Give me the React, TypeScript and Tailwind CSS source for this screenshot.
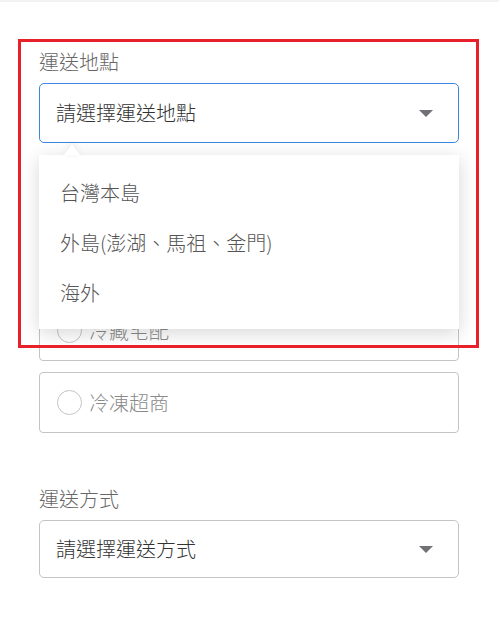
import { useState } from "react";

const PLACES = ["台灣本島", "外島(澎湖、馬祖、金門)", "海外"];
const FONT = "font-['Noto_Sans_CJK_TC','Noto_Sans',sans-serif] font-light";

function Caret() {
    return (
        <svg width="14" height="7" viewBox="0 0 14 7" className="shrink-0">
            <path d="M0 0h14L7 7z" fill="#707075" />
        </svg>
    );
}

function RadioBox({ label }: { label?: string }) {
    return (
        <div className="h-[61px] border border-[#c4c4c4] rounded-[4px] flex items-center pl-[17px] gap-[7px]">
            <span className="w-[25px] h-[25px] rounded-full border border-[#c4c4c4] bg-white" />
            {label && <span className="text-[20px] leading-[24px] text-[#8a8a8a]">{label}</span>}
        </div>
    );
}

export default function App() {
    const [open] = useState(true);

    return (
        <div className={`relative w-[499px] h-[618px] bg-white overflow-hidden ${FONT}`}>
            <div className="h-[2px] bg-[#f2f2f2]" />

            <div className="px-[39px] pr-[40px] pt-[48px]">
                {/* 運送地點 */}
                <div className="text-[20px] leading-[24px] text-[#666]">運送地點</div>
                <div className="relative mt-[9px]">
                    <div className="h-[60px] border border-[#3d87e0] rounded-[5px] flex items-center justify-between pl-[16px] pr-[25px]">
                        <span className="text-[20px] leading-[24px] text-[#333]">請選擇運送地點</span>
                        <Caret />
                    </div>

                    {open && (
                        <div className="absolute left-0 right-0 top-[72px] z-10">
                            <div className="absolute left-[25px] -top-[11px] w-0 h-0 border-l-[8px] border-r-[8px] border-b-[11px] border-l-transparent border-r-transparent border-b-white drop-shadow-[0_-2px_3px_rgba(0,0,0,0.08)]" />
                            <div className="bg-white shadow-[0_4px_18px_rgba(0,0,0,0.16)] pt-[13px] pb-[11px]">
                                {PLACES.map((p) => (
                                    <div key={p} className="h-[50px] flex items-center pl-[21px] text-[20px] leading-[24px] text-[#555]">
                                        {p}
                                    </div>
                                ))}
                            </div>
                        </div>
                    )}
                </div>

                {/* options sitting under the open menu */}
                <div className="mt-[85px] flex flex-col gap-[11px]">
                    <RadioBox />
                    <RadioBox label="冷藏宅配" />
                    <RadioBox label="冷凍超商" />
                </div>

                {/* 運送方式 */}
                <div className="mt-[54px] text-[20px] leading-[24px] text-[#666]">運送方式</div>
                <div className="mt-[9px] h-[58px] border border-[#c4c4c4] rounded-[5px] flex items-center justify-between pl-[16px] pr-[25px]">
                    <span className="text-[20px] leading-[24px] text-[#333]">請選擇運送方式</span>
                    <Caret />
                </div>
            </div>

            {/* annotation frame */}
            <div className="absolute left-[18px] top-[39px] w-[461px] h-[309px] border-[3px] border-[#e8202a] z-20 pointer-events-none" />
        </div>
    );
}
